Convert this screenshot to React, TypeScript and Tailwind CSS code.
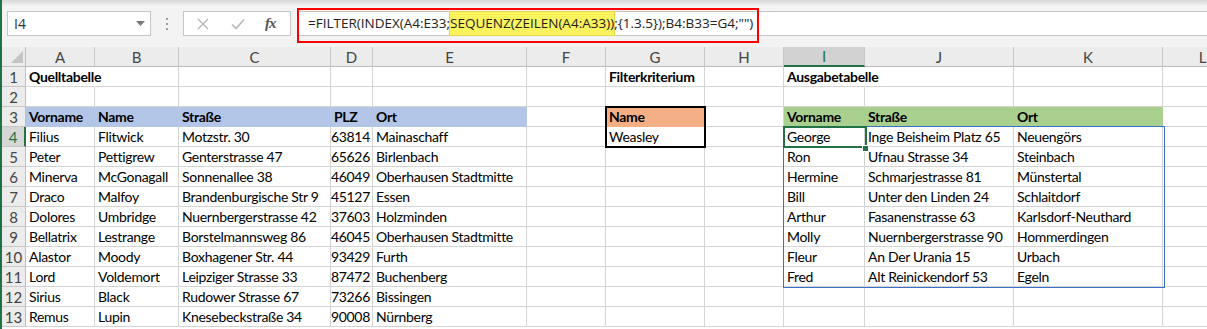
import React from 'react'

type Cell = { t: string; b?: boolean; fill?: string; num?: boolean; ovf?: boolean }
type Row = Record<string, Cell>

const COLS = [
  { id: 'A', w: 'w-[69px]' },
  { id: 'B', w: 'w-[84px]' },
  { id: 'C', w: 'w-[152px]' },
  { id: 'D', w: 'w-[42px]' },
  { id: 'E', w: 'w-[154px]' },
  { id: 'F', w: 'w-[79px]' },
  { id: 'G', w: 'w-[99px]' },
  { id: 'H', w: 'w-[79px]' },
  { id: 'I', w: 'w-[81px]' },
  { id: 'J', w: 'w-[149px]' },
  { id: 'K', w: 'w-[149px]' },
  { id: 'L', w: 'w-[80px]' },
]

const BLUE = 'bg-[#b4c6e7] border-[#b4c6e7]'
const ORANGE = 'bg-[#f4b084] border-[#f4b084]'
const GREEN = 'bg-[#a9d08e] border-[#a9d08e]'

const source = [
  ['Filius', 'Flitwick', 'Motzstr. 30', '63814', 'Mainaschaff'],
  ['Peter', 'Pettigrew', 'Genterstrasse 47', '65626', 'Birlenbach'],
  ['Minerva', 'McGonagall', 'Sonnenallee 38', '46049', 'Oberhausen Stadtmitte'],
  ['Draco', 'Malfoy', 'Brandenburgische Str 9', '45127', 'Essen'],
  ['Dolores', 'Umbridge', 'Nuernbergerstrasse 42', '37603', 'Holzminden'],
  ['Bellatrix', 'Lestrange', 'Borstelmannsweg 86', '46045', 'Oberhausen Stadtmitte'],
  ['Alastor', 'Moody', 'Boxhagener Str. 44', '93429', 'Furth'],
  ['Lord', 'Voldemort', 'Leipziger Strasse 33', '87472', 'Buchenberg'],
  ['Sirius', 'Black', 'Rudower Strasse 67', '73266', 'Bissingen'],
  ['Remus', 'Lupin', 'Knesebeckstraße 34', '90008', 'Nürnberg'],
]

const output = [
  ['George', 'Inge Beisheim Platz 65', 'Neuengörs'],
  ['Ron', 'Ufnau Strasse 34', 'Steinbach'],
  ['Hermine', 'Schmarjestrasse 81', 'Münstertal'],
  ['Bill', 'Unter den Linden 24', 'Schlaitdorf'],
  ['Arthur', 'Fasanenstrasse 63', 'Karlsdorf-Neuthard'],
  ['Molly', 'Nuernbergerstrasse 90', 'Hommerdingen'],
  ['Fleur', 'An Der Urania 15', 'Urbach'],
  ['Fred', 'Alt Reinickendorf 53', 'Egeln'],
]

const buildRows = (): Row[] => {
  const rows: Row[] = [
    {
      A: { t: 'Quelltabelle', b: true, ovf: true },
      G: { t: 'Filterkriterium', b: true },
      I: { t: 'Ausgabetabelle', b: true, ovf: true },
    },
    {},
    {
      A: { t: 'Vorname', b: true, fill: BLUE },
      B: { t: 'Name', b: true, fill: BLUE },
      C: { t: 'Straße', b: true, fill: BLUE },
      D: { t: 'PLZ', b: true, fill: BLUE },
      E: { t: 'Ort', b: true, fill: BLUE },
      G: { t: 'Name', b: true, fill: ORANGE },
      I: { t: 'Vorname', b: true, fill: GREEN },
      J: { t: 'Straße', b: true, fill: GREEN },
      K: { t: 'Ort', b: true, fill: GREEN },
    },
  ]
  source.forEach((s, i) => {
    const r: Row = {
      A: { t: s[0] },
      B: { t: s[1] },
      C: { t: s[2] },
      D: { t: s[3], num: true },
      E: { t: s[4] },
    }
    if (i === 0) r.G = { t: 'Weasley' }
    const o = output[i]
    if (o) {
      r.I = { t: o[0] }
      r.J = { t: o[1] }
      r.K = { t: o[2] }
    }
    rows.push(r)
  })
  return rows
}

const rows = buildRows()

const cellFont = "font-['Lato','Open_Sans',sans-serif] text-[14px] tracking-[-0.3px]"
const uiFont = "font-['Open_Sans','Noto_Sans',sans-serif] tracking-normal"

function GridRow({ n, row }: { n: number; row: Row }) {
  const sel = n === 4
  return (
    <div className="flex h-[20px]">
      <div
        className={
          'w-[24px] shrink-0 border-b border-[#c8c8c8] flex items-center justify-center pt-[1px] text-[15px] tracking-normal ' +
          (sel ? 'bg-[#d6d6d6] border-r-2 border-r-[#217346] text-[#217346]' : 'bg-[#ececec] border-r border-r-[#bdbdbd] text-[#444]')
        }
      >
        {n}
      </div>
      {COLS.map(c => {
        const cell = row[c.id]
        return (
          <div
            key={c.id}
            className={
              c.w +
              ' shrink-0 border-r border-b flex items-end pb-[1px] leading-[17px] whitespace-nowrap px-[3px] text-black ' +
              (cell?.fill ?? 'border-[#d4d4d4] bg-white') +
              (cell?.b ? ' font-bold' : '') +
              (cell?.num ? ' justify-end pr-[2px]' : '') +
              (cell?.ovf ? ' overflow-visible border-r-white relative z-10' : ' overflow-hidden')
            }
          >
            {cell?.t}
          </div>
        )
      })}
    </div>
  )
}

export default function App() {
  return (
    <div className={'flex w-[1207px] h-[329px] overflow-hidden bg-white ' + cellFont}>
      <div className="w-[2px] shrink-0 bg-[#217346]" />
      <div className="relative flex-1 flex flex-col min-w-0">
        {/* formula bar */}
        <div className="h-[47px] shrink-0 flex items-start pt-[11px] bg-[linear-gradient(#d6d6d6,#f3f3f3_6px,#f3f3f3)]">
          <div className={'ml-[5px] w-[144px] h-[25px] shrink-0 bg-white border border-[#c6c6c6] flex items-center justify-between pl-[6px] pr-[5px] text-[14px] text-[#333] ' + uiFont}>
            <span>I4</span>
            <svg width="9" height="5" viewBox="0 0 9 5">
              <path d="M0 0h9L4.5 5z" fill="#7a7a7a" />
            </svg>
          </div>
          <div className="ml-[14px] w-[4px] h-[25px] shrink-0 flex flex-col items-center justify-center gap-[3px]">
            <span className="w-[2px] h-[2px] bg-[#a0a0a0]" />
            <span className="w-[2px] h-[2px] bg-[#a0a0a0]" />
            <span className="w-[2px] h-[2px] bg-[#a0a0a0]" />
          </div>
          <div className="ml-[14px] w-[108px] h-[25px] shrink-0 bg-white border border-[#c6c6c6] relative flex items-center">
            <svg className="ml-[13px]" width="12" height="12" viewBox="0 0 12 12">
              <path d="M1 1l10 10M11 1L1 11" stroke="#b8b8b8" strokeWidth="1.4" />
            </svg>
            <svg className="ml-[22px]" width="14" height="12" viewBox="0 0 14 12">
              <path d="M1 6.5l4 4L13 1.5" stroke="#b8b8b8" strokeWidth="1.6" fill="none" />
            </svg>
            <span className="ml-[20px] font-['Liberation_Serif',serif] italic font-bold text-[15px] text-[#555] tracking-[-1px]">fx</span>
          </div>
          <div className={'ml-[6px] flex-1 h-[25px] bg-white border-y border-l border-[#c6c6c6] flex items-center pl-[10px] text-[13.5px] text-[#222] whitespace-nowrap ' + uiFont}>
            <span>=FILTER(INDEX(A4:E33;</span>
            <span className="bg-[#fbf35e] outline outline-[#e2d64a] py-[1px]">SEQUENZ(ZEILEN(A4:A33))</span>
            <span>;{'{1.3.5}'});B4:B33=G4;""&#41;</span>
          </div>
        </div>

        {/* column headers */}
        <div className="flex h-[20px] shrink-0 text-[15px] tracking-normal">
          <div className="w-[24px] shrink-0 bg-[#ececec] border-r border-b border-[#bdbdbd] flex items-end justify-end pr-[2px] pb-[3px]">
            <svg width="12" height="12" viewBox="0 0 12 12">
              <path d="M12 0V12H0z" fill="#c4c4c4" />
            </svg>
          </div>
          {COLS.map(c => (
            <div
              key={c.id}
              className={
                c.w +
                ' shrink-0 border-r border-[#c8c8c8] flex items-center justify-center pt-[1px] ' +
                (c.id === 'I'
                  ? 'bg-[#d2d2d2] border-b-2 border-b-[#217346] text-[#217346]'
                  : 'bg-[#ececec] border-b border-b-[#bdbdbd] text-[#444]')
              }
            >
              {c.id}
            </div>
          ))}
        </div>

        {rows.map((r, i) => (
          <GridRow key={i} n={i + 1} row={r} />
        ))}

        {/* overlays: annotation, criteria box, spill range, active cell */}
        <div className="absolute left-[295px] top-[8px] w-[462px] h-[35px] border-2 border-[#ff0000] pointer-events-none" />
        <div className="absolute left-[603px] top-[106px] w-[101px] h-[42px] border-2 border-black pointer-events-none z-20" />
        <div className="absolute left-[781px] top-[126px] w-[382px] h-[162px] border border-[#3a6fca] pointer-events-none z-20" />
        <div className="absolute left-[781px] top-[126px] w-[84px] h-[22px] border-2 border-[#217346] pointer-events-none z-30" />
        <div className="absolute left-[860px] top-[145px] w-[7px] h-[7px] bg-[#217346] border border-white pointer-events-none z-30" />
      </div>
    </div>
  )
}
